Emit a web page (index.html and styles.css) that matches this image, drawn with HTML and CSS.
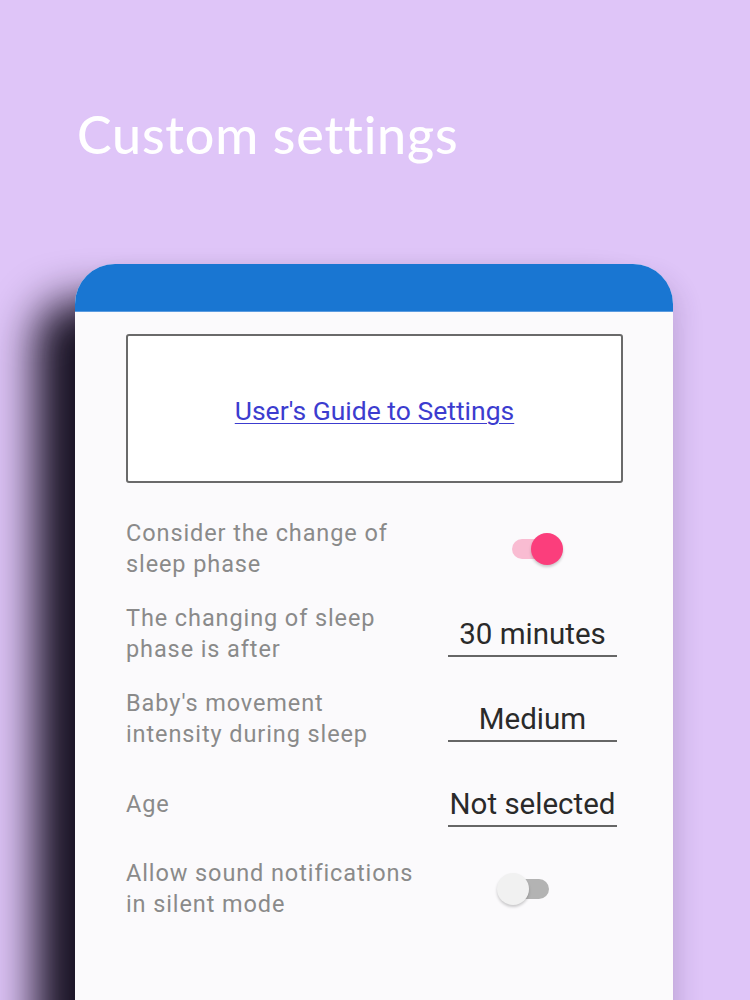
FILE: index.html
```html
<!DOCTYPE html>
<html>
<head>
<meta charset="utf-8">
<link rel="stylesheet" href="styles.css">
</head>
<body>
<h1 class="title">Custom settings</h1>
<div class="phone">
  <div class="appbar"></div>
  <div class="content">
    <div class="guide"><a class="guide-link" href="#">User's Guide to Settings</a></div>
    <div class="rows">
      <div class="row">
        <div class="label">Consider the change of<br>sleep phase</div>
        <div class="control"><div class="switch on"><span class="track"></span><span class="thumb"></span></div></div>
      </div>
      <div class="row">
        <div class="label">The changing of sleep<br>phase is after</div>
        <div class="control"><div class="value">30 minutes</div></div>
      </div>
      <div class="row">
        <div class="label">Baby's movement<br>intensity during sleep</div>
        <div class="control"><div class="value">Medium</div></div>
      </div>
      <div class="row">
        <div class="label">Age</div>
        <div class="control"><div class="value">Not selected</div></div>
      </div>
      <div class="row">
        <div class="label">Allow sound notifications<br>in silent mode</div>
        <div class="control"><div class="switch off"><span class="track"></span><span class="thumb"></span></div></div>
      </div>
    </div>
  </div>
</div>
</body>
</html>
```
FILE: styles.css
```css
html, body {
  margin: 0;
  padding: 0;
}
body {
  width: 750px;
  height: 1000px;
  overflow: hidden;
  background: #dfc5f8;
  font-family: Roboto, "Noto Sans", sans-serif;
}
.title {
  margin: 104px 0 0 77px;
  font-family: Lato, "Open Sans", sans-serif;
  font-weight: 500;
  font-size: 52px;
  line-height: 60px;
  color: #ffffff;
  letter-spacing: 0.8px;
}
.phone {
  margin: 100px 0 0 75px;
  width: 598px;
  height: 760px;
  background: #fbfafc;
  border-radius: 40px 40px 0 0;
  overflow: hidden;
  box-shadow: -40px 36px 44px rgba(18, 12, 28, 0.97), 10px 10px 22px rgba(60, 30, 90, 0.12);
}
.appbar {
  height: 47px;
  background: #1976d2;
  border-bottom: 1px solid #5a9be0;
}
.content {
  padding: 22px 50px 0 51px;
}
.guide {
  height: 145px;
  border: 2px solid #6a6a6a;
  border-radius: 3px;
  background: #ffffff;
  display: flex;
  align-items: center;
  justify-content: center;
}
.guide-link {
  font-size: 26.5px;
  color: #3c3ccf;
  text-decoration: underline;
  text-underline-offset: 3px;
  text-decoration-thickness: 1px;
  margin-top: 3px;
}
.rows {
  margin-top: 35px;
  display: flex;
  flex-direction: column;
  gap: 23px;
}
.row {
  height: 62px;
  display: flex;
  align-items: center;
}
.label {
  flex: 1;
  font-size: 23.5px;
  line-height: 31px;
  letter-spacing: 0.9px;
  color: #8a8a8a;
}
.control {
  width: 169px;
  margin-right: 6px;
  display: flex;
  align-items: center;
}
.value {
  width: 100%;
  text-align: center;
  font-size: 29.5px;
  line-height: 34px;
  color: #2a2a2a;
  padding: 6px 0 4px;
  border-bottom: 2px solid #666666;
  white-space: nowrap;
}
.switch {
  position: relative;
  width: 52px;
  height: 32px;
}
.switch.on { margin-left: 63px; }
.switch.off { margin-left: 49px; }
.track {
  position: absolute;
  top: 6px;
  height: 20px;
  border-radius: 10px;
}
.thumb {
  position: absolute;
  top: 0;
  width: 32px;
  height: 32px;
  border-radius: 50%;
}
.switch.on .track {
  left: 1px;
  width: 46px;
  background: #f9bcd2;
}
.switch.on .thumb {
  right: 0;
  background: #fb3e7c;
  box-shadow: 0 2px 3px rgba(0, 0, 0, 0.2);
}
.switch.off .track {
  left: 5px;
  width: 47px;
  background: #b3b3b3;
}
.switch.off .thumb {
  left: 0;
  background: #f1f1f1;
  box-shadow: 0 2px 3px rgba(0, 0, 0, 0.2);
}
```
